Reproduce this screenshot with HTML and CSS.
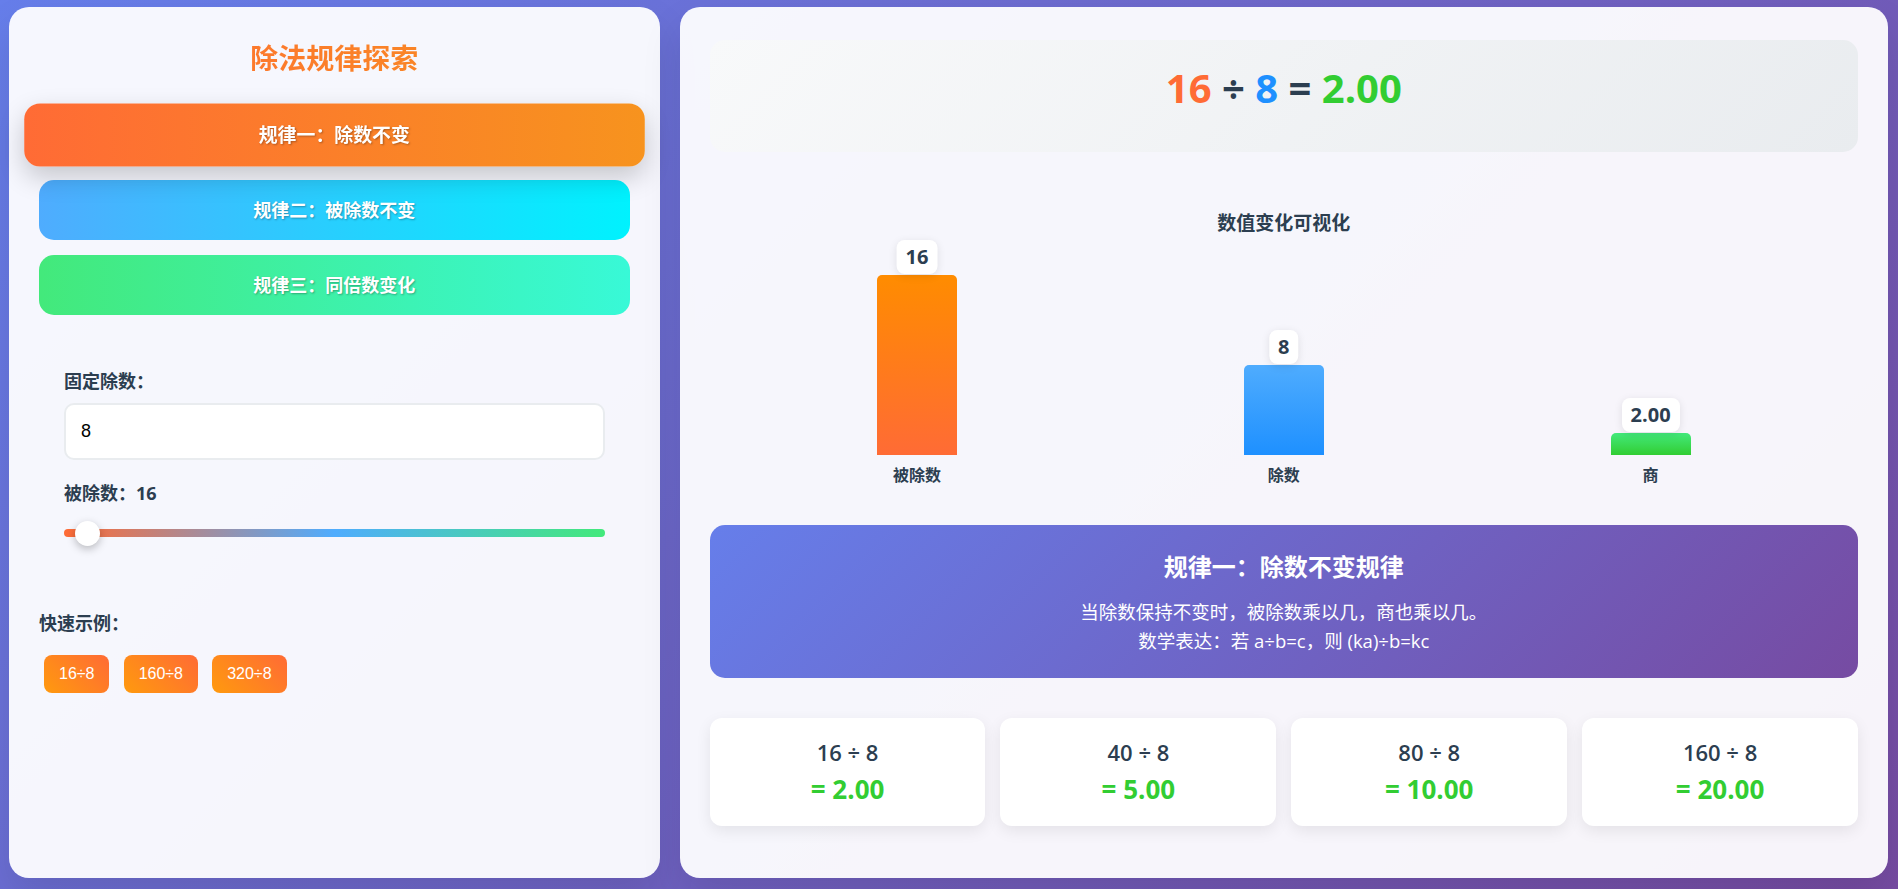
FILE: index.html
```html
<!DOCTYPE html>
<html lang="zh-CN">
<head>
<meta charset="UTF-8">
<meta name="viewport" content="width=device-width, initial-scale=1.0">
<title>除法规律探索</title>
<link rel="stylesheet" href="styles.css">
</head>
<body>

<div class="app">
    <!-- 左侧：规律选择和控制 -->
    <aside class="panel side">
        <h1 class="title">除法规律探索</h1>

        <button class="rule-btn rule-one active">规律一：除数不变</button>
        <button class="rule-btn rule-two">规律二：被除数不变</button>
        <button class="rule-btn rule-three">规律三：同倍数变化</button>

        <div class="controls">
            <label class="field-label">固定除数：</label>
            <input class="num-input" type="number" value="8">
            <label class="field-label slider-label">被除数：16</label>
            <input class="slider" type="range" min="8" max="400" step="8" value="16">
        </div>

        <div class="quick">
            <div class="field-label quick-label">快速示例：</div>
            <button class="quick-btn">16÷8</button>
            <button class="quick-btn">160÷8</button>
            <button class="quick-btn">320÷8</button>
        </div>
    </aside>

    <!-- 右侧：算式、图表和说明 -->
    <main class="panel stage">
        <div class="equation">
            <span class="num-a">16</span> <span class="op">÷</span> <span class="num-b">8</span> <span class="op">=</span> <span class="num-c">2.00</span>
        </div>

        <div class="chart">
            <h3 class="chart-title">数值变化可视化</h3>
            <div class="bars">
                <div class="bar-item">
                    <div class="bar bar-dividend" style="height: 180px;"><span class="bar-value">16</span></div>
                    <div class="bar-name">被除数</div>
                </div>
                <div class="bar-item">
                    <div class="bar bar-divisor" style="height: 90px;"><span class="bar-value">8</span></div>
                    <div class="bar-name">除数</div>
                </div>
                <div class="bar-item">
                    <div class="bar bar-quotient" style="height: 22.5px;"><span class="bar-value">2.00</span></div>
                    <div class="bar-name">商</div>
                </div>
            </div>
        </div>

        <div class="rule-box">
            <h2 class="rule-title">规律一：除数不变规律</h2>
            <p class="rule-text">当除数保持不变时，被除数乘以几，商也乘以几。<br>数学表达：若 a÷b=c，则 (ka)÷b=kc</p>
        </div>

        <div class="examples">
            <div class="card">
                <div class="card-expr">16 ÷ 8</div>
                <div class="card-result">= 2.00</div>
            </div>
            <div class="card">
                <div class="card-expr">40 ÷ 8</div>
                <div class="card-result">= 5.00</div>
            </div>
            <div class="card">
                <div class="card-expr">80 ÷ 8</div>
                <div class="card-result">= 10.00</div>
            </div>
            <div class="card">
                <div class="card-expr">160 ÷ 8</div>
                <div class="card-result">= 20.00</div>
            </div>
        </div>
    </main>
</div>

</body>
</html>
```

FILE: styles.css
```css
/* 页面整体 */
body {
    margin: 0;
    height: 100vh;
    font-family: "Open Sans", "Noto Sans CJK SC", sans-serif;
    color: #2c3e50;
    background: linear-gradient(135deg, #667eea 0%, #764ba2 100%);
}

.app {
    display: grid;
    grid-template-columns: 35fr 65fr;
    gap: 20px;
    height: 100vh;
    box-sizing: border-box;
    padding: 7px 10px 11px 9px;
}

.panel {
    min-width: 0;
    box-sizing: border-box;
    padding: 30px;
    background: rgba(255, 255, 255, 0.94);
    border-radius: 20px;
    box-shadow: 0 20px 40px rgba(0, 0, 0, 0.1);
}

/* 左侧 */
.title {
    margin: 3px 0 29px;
    font-size: 28px;
    line-height: 36px;
    text-align: center;
    background: linear-gradient(90deg, #ff6b35, #f7931e);
    -webkit-background-clip: text;
    background-clip: text;
    color: transparent;
}

.rule-btn {
    display: block;
    width: 100%;
    margin-bottom: 15px;
    padding: 16px;
    border: none;
    border-radius: 15px;
    font-family: inherit;
    font-size: 18px;
    font-weight: bold;
    line-height: 28px;
    color: #fff;
    text-shadow: 1px 1px 2px rgba(0, 0, 0, 0.3);
    cursor: pointer;
    transition: transform 0.3s;
}

.rule-one {
    background: linear-gradient(90deg, #ff6b35, #f7931e);
}

.rule-two {
    background: linear-gradient(90deg, #4facfe, #00f2fe);
}

.rule-three {
    background: linear-gradient(90deg, #43e97b, #38f9d7);
}

.rule-btn.active {
    transform: scale(1.05);
    box-shadow: 0 10px 25px rgba(0, 0, 0, 0.2);
}

.controls {
    margin-top: 28px;
    padding: 25px;
}

.field-label {
    display: block;
    margin-bottom: 8px;
    font-size: 18px;
    font-weight: bold;
    line-height: 27px;
}

.num-input {
    display: block;
    width: 100%;
    box-sizing: border-box;
    padding: 16px 15px;
    border: 2px solid #e9ecef;
    border-radius: 10px;
    background: #fff;
    font-family: "Liberation Sans", Arial, sans-serif;
    font-size: 18px;
    color: #000;
    outline: none;
}

.slider-label {
    margin-top: 20px;
}

.slider {
    -webkit-appearance: none;
    appearance: none;
    display: block;
    width: 100%;
    height: 8px;
    margin: 22px 0 0;
    border-radius: 4px;
    background: linear-gradient(90deg, #ff6b35, #4facfe, #43e97b);
    outline: none;
}

.slider::-webkit-slider-thumb {
    -webkit-appearance: none;
    width: 25px;
    height: 25px;
    border-radius: 50%;
    background: #fff;
    box-shadow: 0 3px 8px rgba(0, 0, 0, 0.25);
    cursor: pointer;
}

.quick {
    margin-top: 48px;
}

.quick-label {
    margin-bottom: 13px;
}

.quick-btn {
    margin: 5px;
    padding: 10px 15px;
    border: none;
    border-radius: 8px;
    font-family: "Liberation Sans", Arial, sans-serif;
    font-size: 16px;
    color: #fff;
    background: linear-gradient(45deg, #ff9a0e, #ff6b35);
    cursor: pointer;
}

/* 右侧 */
.stage {
    padding-top: 33px;
}

.equation {
    margin-bottom: 30px;
    padding: 22px 30px 38px;
    border-radius: 15px;
    background: linear-gradient(135deg, #f8f9fa 0%, #e9ecef 100%);
    text-align: center;
    font-size: 40px;
    font-weight: bold;
    line-height: 52px;
}

.num-a {
    color: #ff6b35;
}

.num-b {
    color: #1e90ff;
}

.num-c {
    color: #32cd32;
}

.op {
    color: #2c3e50;
}

.chart {
    margin-bottom: 38px;
    padding: 28px 24px 0;
}

.chart-title {
    margin: 0;
    font-size: 19px;
    line-height: 27px;
    text-align: center;
}

.bars {
    display: flex;
    justify-content: space-around;
    align-items: flex-end;
    height: 250px;
}

.bar-item {
    display: flex;
    flex-direction: column;
    align-items: center;
}

.bar {
    position: relative;
    width: 80px;
    border-radius: 5px 5px 0 0;
}

.bar-dividend {
    background: linear-gradient(to bottom, #ff8c00, #ff6b35);
}

.bar-divisor {
    background: linear-gradient(to bottom, #4facfe, #1e90ff);
}

.bar-quotient {
    background: linear-gradient(to bottom, #43e97b, #32cd32);
}

.bar-value {
    position: absolute;
    bottom: calc(100% + 1px);
    left: 50%;
    transform: translateX(-50%);
    padding: 5px 9px;
    border-radius: 8px;
    background: #fff;
    box-shadow: 0 2px 8px rgba(0, 0, 0, 0.1);
    font-size: 20px;
    font-weight: bold;
    line-height: 24px;
    white-space: nowrap;
}

.bar-name {
    margin-top: 8px;
    font-size: 16px;
    font-weight: 600;
    line-height: 24px;
}

.rule-box {
    margin-bottom: 40px;
    padding: 27px 30px 23px;
    border-radius: 15px;
    background: linear-gradient(135deg, #667eea 0%, #764ba2 100%);
    color: #fff;
    text-align: center;
}

.rule-title {
    margin: 0 0 15px;
    font-size: 24px;
    line-height: 30px;
}

.rule-text {
    margin: 0;
    font-size: 18.5px;
    line-height: 29px;
}

.examples {
    display: grid;
    grid-template-columns: repeat(4, 1fr);
    gap: 15px;
}

.card {
    padding: 20px;
    border-radius: 12px;
    background: #fff;
    box-shadow: 0 5px 15px rgba(0, 0, 0, 0.08);
    text-align: center;
}

.card-expr {
    font-size: 22px;
    font-weight: 600;
    line-height: 28px;
}

.card-result {
    margin-top: 6px;
    font-size: 26px;
    font-weight: bold;
    line-height: 34px;
    color: #32cd32;
}
```
